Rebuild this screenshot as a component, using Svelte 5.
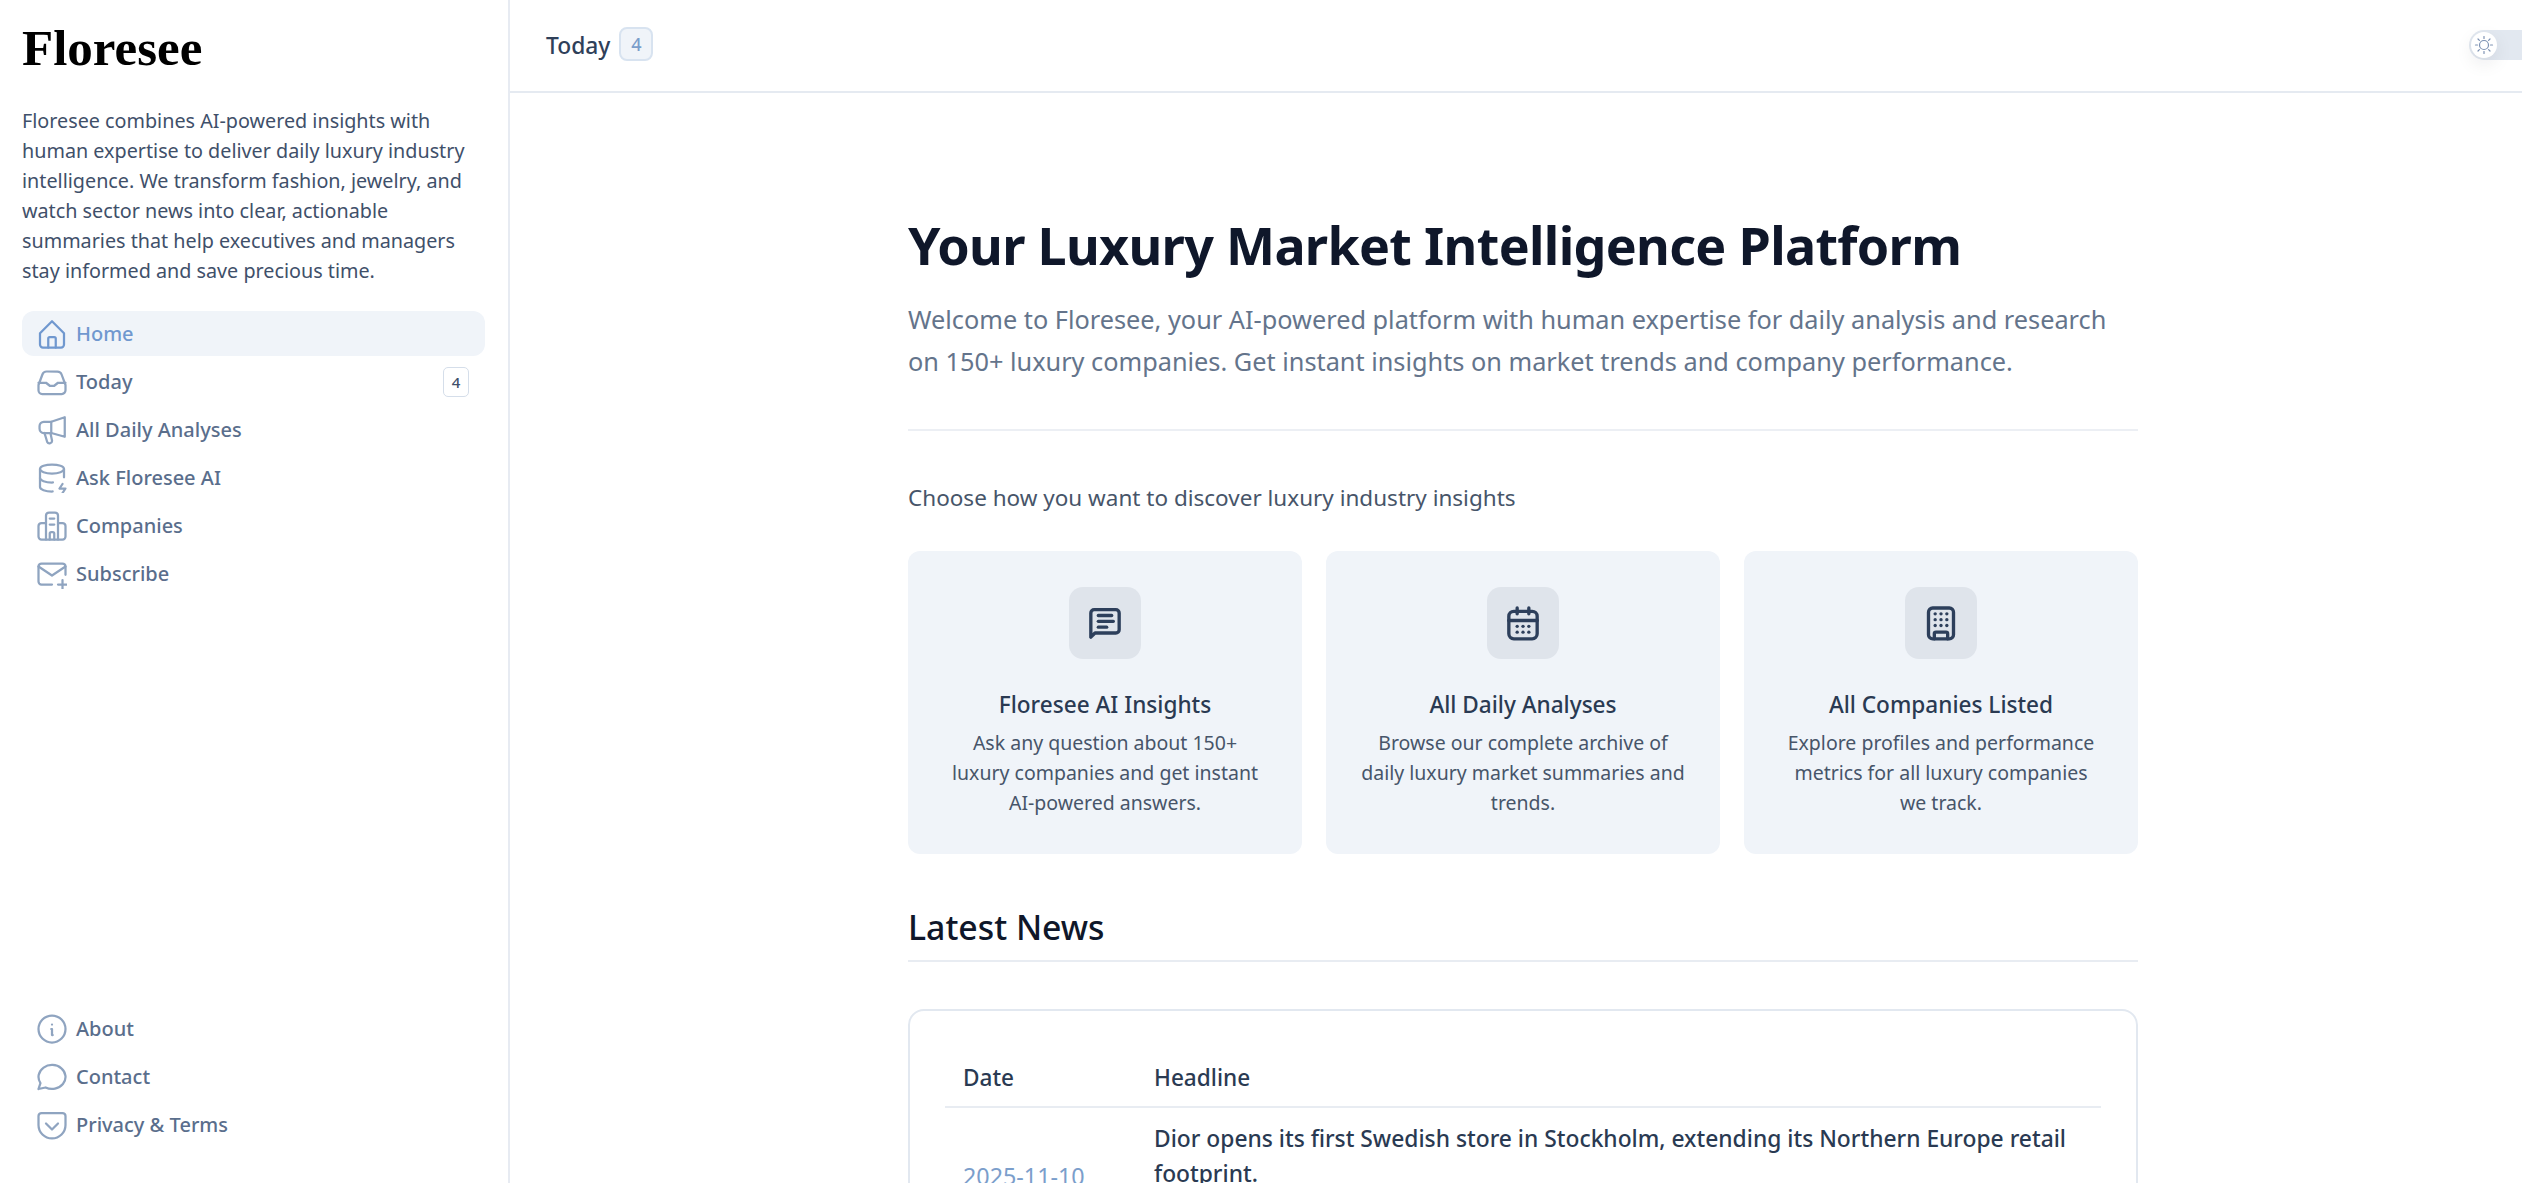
<script>
  const topNav = [
    { label: 'Home', active: true, d: ['M4 11.5L12 3.5l8 8V19a2 2 0 0 1-2 2H6a2 2 0 0 1-2-2z', 'M9.5 21v-6a1 1 0 0 1 1-1h3a1 1 0 0 1 1 1v6'] },
    { label: 'Today', badge: 4, d: ['M3 14l2.600-7A3 3 0 0 1 8.400 5h7.200a3 3 0 0 1 2.800 2l2.600 7v3.500a2.500 2.500 0 0 1-2.500 2.500H5.500A2.500 2.500 0 0 1 3 17.500z', 'M3 12.500h5l2.500 2h3l2.500-2h5'] },
    { label: 'All Daily Analyses', d: ['M20.500 3.500v13L11.500 14H6.500A2.800 2.800 0 0 1 3.700 11.200V9.300A2.800 2.800 0 0 1 6.500 6.500H11.500z', 'M11.500 6.500v7.500', 'M7 14l1.800 6a1.700 1.700 0 0 0 3.200-1l-1-4.800'] },
    { label: 'Ask Floresee AI', d: ['M4 6c0 1.657 3.582 3 8 3s8-1.343 8-3s-3.582-3-8-3s-8 1.343-8 3', 'M4 6v6c0 1.657 3.582 3 8 3c.21 0 .42-.003 .626-.01', 'M20 11.500v-5.500', 'M4 12v6c0 1.657 3.582 3 8 3c.148 0 .294-.002 .44-.005', 'M19 16l-2 3h4l-2 3'] },
    { label: 'Companies', d: ['M8 21V5a2 2 0 0 1 2-2h4a2 2 0 0 1 2 2v16', 'M8 10H5a2 2 0 0 0-2 2v7a2 2 0 0 0 2 2h14a2 2 0 0 0 2-2v-7a2 2 0 0 0-2-2h-3', 'M10.500 7h3', 'M10.500 11h3', 'M10.500 21v-4a1 1 0 0 1 1-1h1a1 1 0 0 1 1 1v4'] },
    { label: 'Subscribe', d: ['M12 19H5a2 2 0 0 1-2-2V7a2 2 0 0 1 2-2h14a2 2 0 0 1 2 2v5.500', 'M3 7l9 6l9-6', 'M16 19h6', 'M19 16v6'] }
  ];
  const bottomNav = [
    { label: 'About', d: ['M3 12a9 9 0 1 0 18 0a9 9 0 0 0-18 0', 'M12 9h.01', 'M11.500 12h.5v4h.5'] },
    { label: 'Contact', d: ['M3 20l1.300-3.900c-2.324-3.437-1.426-7.872 2.100-10.374c3.526-2.501 8.590-2.296 11.845 .48c3.255 2.777 3.695 7.266 1.029 10.501c-2.666 3.235-7.615 4.215-11.574 2.293l-4.700 1'] },
    { label: 'Privacy & Terms', d: ['M5 4h14a2 2 0 0 1 2 2v6a9 9 0 0 1-18 0V6a2 2 0 0 1 2-2', 'M8 11l4 4l4-4'] }
  ];
  const cards = [
    { title: 'Floresee AI Insights', lines: ['Ask any question about 150+', 'luxury companies and get instant', 'AI-powered answers.'], d: ['M3.500 20.500V6a2 2 0 0 1 2-2h13a2 2 0 0 1 2 2v10a2 2 0 0 1-2 2H6z', 'M8 7.500h8', 'M8 11h9', 'M8 14.500h5'] },
    { title: 'All Daily Analyses', lines: ['Browse our complete archive of', 'daily luxury market summaries and', 'trends.'], d: ['M6.500 5h11a3 3 0 0 1 3 3v10.500a3 3 0 0 1-3 3h-11a3 3 0 0 1-3-3V8a3 3 0 0 1 3-3', 'M8.500 3v3.500', 'M15.500 3v3.500', 'M3.500 10.500h17', 'M8.500 14h.01', 'M12 14h.01', 'M15.500 14h.01', 'M8.500 17.500h.01', 'M12 17.500h.01', 'M15.500 17.500h.01'] },
    { title: 'All Companies Listed', lines: ['Explore profiles and performance', 'metrics for all luxury companies', 'we track.'], d: ['M7 3h10a2.500 2.500 0 0 1 2.500 2.500v13.500a2.500 2.500 0 0 1-2.500 2.500H7a2.500 2.500 0 0 1-2.500-2.500V5.500A2.500 2.500 0 0 1 7 3', 'M8.500 6.500h.01', 'M12 6.500h.01', 'M15.500 6.500h.01', 'M8.500 10h.01', 'M12 10h.01', 'M15.500 10h.01', 'M8.500 13.500h.01', 'M12 13.500h.01', 'M15.500 13.500h.01', 'M8 21.500v-3a1 1 0 0 1 1-1h6a1 1 0 0 1 1 1v3'] }
  ];
  const sunRays = ['M12 3.500v2', 'M12 18.500v2', 'M3.500 12h2', 'M18.500 12h2', 'M6 6l1.400 1.400', 'M16.600 16.600L18 18', 'M6 18l1.400-1.400', 'M16.600 7.400L18 6'];
</script>

<div class="page">
  <aside class="sidebar">
    <div class="logo">Floresee</div>
    <p class="intro">Floresee combines AI-powered insights with human expertise to deliver daily luxury industry intelligence. We transform fashion, jewelry, and watch sector news into clear, actionable summaries that help executives and managers stay informed and save precious time.</p>
    <nav class="nav">
      {#each topNav as item}
        <div class="nav-item" class:active={item.active}>
          <svg class="nav-icon" viewBox="2 2 20 20">
            {#each item.d as p}<path d={p} />{/each}
          </svg>
          <span class="nav-label">{item.label}</span>
          {#if item.badge}<span class="nav-badge">{item.badge}</span>{/if}
        </div>
      {/each}
    </nav>
    <nav class="nav bottom">
      {#each bottomNav as item}
        <div class="nav-item">
          <svg class="nav-icon" viewBox="2 2 20 20">
            {#each item.d as p}<path d={p} />{/each}
          </svg>
          <span class="nav-label">{item.label}</span>
        </div>
      {/each}
    </nav>
  </aside>

  <div class="right">
    <header class="topbar">
      <span class="top-title">Today</span>
      <span class="top-badge">4</span>
      <div class="toggle">
        <span class="knob">
          <svg viewBox="0 0 24 24">
            <circle cx="12" cy="12" r="4.500" />
            {#each sunRays as p}<path d={p} />{/each}
          </svg>
        </span>
      </div>
    </header>

    <main class="main">
      <div class="content">
        <h1>Your Luxury Market Intelligence Platform</h1>
        <p class="lead">Welcome to Floresee, your AI-powered platform with human expertise for daily analysis and research on 150+ luxury companies. Get instant insights on market trends and company performance.</p>
        <hr />
        <p class="choose">Choose how you want to discover luxury industry insights</p>
        <div class="cards">
          {#each cards as card}
            <div class="card">
              <div class="card-icon">
                <svg viewBox="0 0 24 24">
                  {#each card.d as p}<path d={p} />{/each}
                </svg>
              </div>
              <h3>{card.title}</h3>
              <p>{#each card.lines as line}<span class="line">{line}</span>{/each}</p>
            </div>
          {/each}
        </div>
        <h2>Latest News</h2>
        <div class="news">
          <table>
            <thead>
              <tr><th class="date-col">Date</th><th>Headline</th></tr>
            </thead>
            <tbody>
              <tr>
                <td class="date">2025-11-10</td>
                <td class="headline">Dior opens its first Swedish store in Stockholm, extending its Northern Europe retail footprint.</td>
              </tr>
            </tbody>
          </table>
        </div>
      </div>
    </main>
  </div>
</div>

<style>
  :global(body) { margin: 0; background: #fff; font-family: "Noto Sans", sans-serif; }
  .page { display: flex; height: 100vh; overflow: hidden; }

  .sidebar { width: 510px; flex: none; box-sizing: border-box; border-right: 2px solid #e7ebf2; padding: 0 23px 36px 22px; display: flex; flex-direction: column; }
  .logo { font-family: "Liberation Serif", serif; font-weight: 700; font-size: 51px; line-height: 60px; margin-top: 18px; color: #000; }
  .intro { margin: 28px 0 0; font-size: 19.750px; line-height: 30px; color: #3f506a; }

  .nav { display: flex; flex-direction: column; gap: 3px; }
  .nav:first-of-type { margin-top: 25px; }
  .bottom { margin-top: auto; }
  .nav-item { height: 45px; display: flex; align-items: center; padding: 0 16px 0 15px; gap: 9px; border-radius: 12px; color: #5a6e8c; font-size: 20px; font-weight: 500; }
  .nav-item.active { background: #f0f4f9; color: #7098cf; }
  .nav-icon { width: 30px; height: 30px; flex: none; fill: none; stroke: #8fa4c0; stroke-width: 1.500; stroke-linecap: round; stroke-linejoin: round; }
  .active .nav-icon { stroke: #7098cf; }
  .nav-label { flex: 1; }
  .nav-badge { width: 26px; height: 30px; box-sizing: border-box; border: 1.500px solid #d5deea; border-radius: 5px; font-size: 15px; color: #3f506a; display: flex; align-items: center; justify-content: center; }

  .right { flex: 1; min-width: 0; display: flex; flex-direction: column; }
  .topbar { height: 93px; flex: none; box-sizing: border-box; border-bottom: 2px solid #e5eaf1; display: flex; align-items: center; padding: 0 0 0 36px; }
  .top-title { font-size: 22.800px; font-weight: 500; color: #2f4059; }
  .top-badge { width: 34px; height: 34px; margin: -3px 0 0 9px; box-sizing: border-box; border: 2px solid #d8e3f0; background: #f0f4f9; border-radius: 8px; font-size: 18px; font-weight: 500; color: #7b9ecb; display: flex; align-items: center; justify-content: center; }
  .toggle { margin-left: auto; margin-top: -1px; width: 53px; height: 30px; border-radius: 15px 0 0 15px; background: #e2e8f0; position: relative; }
  .knob { position: absolute; left: 2px; top: 2px; width: 26px; height: 26px; border-radius: 50%; background: #fff; box-shadow: 0 6px 18px rgba(15, 23, 42, 0.08); display: flex; align-items: center; justify-content: center; }
  .knob svg { width: 24px; height: 24px; fill: none; stroke: #7d92b3; stroke-width: 1.200; stroke-linecap: round; }

  .main { flex: 1; min-height: 0; overflow: hidden; padding: 0 0 0 14px; }
  .content { width: 1230px; margin: 0 auto; padding-top: 120px; }
  h1 { margin: 0; font-size: 52px; line-height: 64px; font-weight: 700; letter-spacing: -0.680px; color: #0f172a; }
  .lead { margin: 21px 0 0; font-size: 25.300px; line-height: 42px; color: #64748b; }
  hr { border: 0; border-top: 2px solid #eceff4; margin: 47px 0 0; }
  .choose { margin: 49px 0 0; font-size: 22.500px; line-height: 36px; color: #475569; }
  .cards { display: grid; grid-template-columns: repeat(3, 1fr); gap: 24px; margin-top: 35px; }
  .card { background: #f0f4f9; border-radius: 12px; padding: 36px 16px; text-align: center; height: 303px; box-sizing: border-box; }
  .card-icon { width: 72px; height: 72px; border-radius: 14px; background: #dfe4eb; margin: 0 auto; display: flex; align-items: center; justify-content: center; }
  .card-icon svg { width: 40px; height: 40px; fill: none; stroke: #2d3f5b; stroke-width: 2; stroke-linecap: round; stroke-linejoin: round; }
  h3 { margin: 30px 0 0; font-size: 22.600px; line-height: 32px; font-weight: 500; color: #2a3a52; }
  .card p { margin: 7px 0 0; font-size: 19.500px; line-height: 30px; color: #475569; }
  .line { display: block; }
  h2 { margin: 49px 0 0; font-size: 33.800px; line-height: 48px; font-weight: 500; color: #0f172a; border-bottom: 2px solid #e8ecf2; padding-bottom: 9px; }
  .news { margin-top: 47px; border: 2px solid #e2e8f0; border-radius: 16px; padding: 49px 35px 28px; }
  table { width: 100%; border-collapse: collapse; }
  th { text-align: left; font-size: 22.600px; font-weight: 500; color: #2a3a52; padding: 0 18px 10px; line-height: 36px; border-bottom: 2px solid #e8ecf2; }
  .date-col { width: 155px; }
  td { padding: 13px 18px; font-size: 23.300px; line-height: 35px; vertical-align: middle; }
  .date { color: #7b9ecb; }
  .headline { font-weight: 500; font-size: 22.800px; color: #2a3a52; padding-bottom: 54px; }
</style>
